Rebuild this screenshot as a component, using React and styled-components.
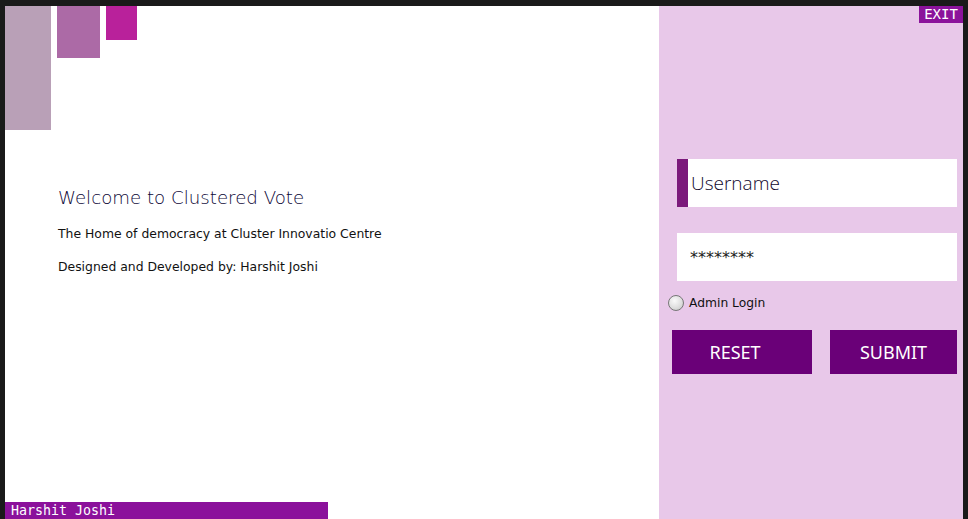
import React from "react";
import styled, { createGlobalStyle } from "styled-components";

const GlobalStyle = createGlobalStyle`
  html, body {
    margin: 0;
    padding: 0;
    background: #1a1a1a;
  }
  body {
    font-family: "DejaVu Sans", "Liberation Sans", sans-serif;
  }
`;

const App = () => {
  return (
    <Frame>
      <GlobalStyle />
      <Window>
        <LeftPanel>
          <Blocks>
            <Block w={46} h={124} color="#b9a0b7" />
            <Block w={43} h={52} color="#ac6aa6" />
            <Block w={31} h={34} color="#b9219b" />
          </Blocks>
          <Intro>
            <Title>Welcome to Clustered Vote</Title>
            <Line>The Home of democracy at Cluster Innovatio Centre</Line>
            <Line>Designed and Developed by: Harshit Joshi</Line>
          </Intro>
          <Footer>Harshit Joshi</Footer>
        </LeftPanel>
        <RightPanel>
          <TopRow>
            <ExitButton>EXIT</ExitButton>
          </TopRow>
          <Field marked>
            <FieldText big>Username</FieldText>
          </Field>
          <Field>
            <FieldText>********</FieldText>
          </Field>
          <RadioRow>
            <Radio />
            <RadioLabel>Admin Login</RadioLabel>
          </RadioRow>
          <Buttons>
            <ActionButton w={140} shift={14}>RESET</ActionButton>
            <ActionButton w={127}>SUBMIT</ActionButton>
          </Buttons>
        </RightPanel>
      </Window>
    </Frame>
  );
};

export default App;

const Frame = styled.div`
  width: 968px;
  height: 519px;
  box-sizing: border-box;
  padding: 6px 5px 0 5px;
  background: #1a1a1a;
  overflow: hidden;
`;

const Window = styled.div`
  display: flex;
  height: 100%;
`;

const LeftPanel = styled.div`
  width: 654px;
  background: #ffffff;
  display: flex;
  flex-direction: column;
`;

const Blocks = styled.div`
  display: flex;
  align-items: flex-start;
  gap: 6px;
`;

const Block = styled.div`
  width: ${(p) => p.w}px;
  height: ${(p) => p.h}px;
  background: ${(p) => p.color};
`;

const Intro = styled.div`
  margin: 57px 0 0 53px;
  display: flex;
  flex-direction: column;
`;

const Title = styled.div`
  font-size: 18.2px;
  font-weight: 200;
  color: #0c0636;
  line-height: 22px;
  margin-bottom: 17px;
`;

const Line = styled.div`
  font-size: 12.4px;
  color: #111;
  line-height: 15px;
  margin-bottom: 18px;
`;

const Footer = styled.div`
  margin-top: auto;
  width: 323px;
  height: 17px;
  background: #8b119b;
  color: #fff;
  font-family: "DejaVu Sans Mono", "Liberation Mono", monospace;
  font-size: 13.3px;
  line-height: 17px;
  padding-left: 6px;
  box-sizing: border-box;
`;

const RightPanel = styled.div`
  flex: 1;
  background: #e8c8e9;
  display: flex;
  flex-direction: column;
`;

const TopRow = styled.div`
  display: flex;
  justify-content: flex-end;
`;

const ExitButton = styled.div`
  width: 44px;
  height: 17px;
  background: #8b139b;
  color: #fff;
  font-family: "DejaVu Sans Mono", "Liberation Mono", monospace;
  font-size: 14px;
  line-height: 17px;
  text-align: center;
`;

const Field = styled.div`
  margin: ${(p) => (p.marked ? "136px" : "26px")} 6px 0 18px;
  height: 48px;
  background: #fff;
  display: flex;
  align-items: center;
  box-sizing: border-box;
  border-left: ${(p) => (p.marked ? "11px solid #7b1a7b" : "none")};
  padding-left: ${(p) => (p.marked ? "3px" : "13px")};
`;

const FieldText = styled.span`
  font-size: ${(p) => (p.big ? "19px" : "16px")};
  font-weight: ${(p) => (p.big ? 300 : 400)};
  color: ${(p) => (p.big ? "#12082e" : "#222")};
  font-family: ${(p) =>
    p.big
      ? `"Open Sans", "Noto Sans", "DejaVu Sans", sans-serif`
      : `"DejaVu Sans", sans-serif`};
`;

const RadioRow = styled.div`
  display: flex;
  align-items: center;
  margin: 14px 0 0 9px;
  height: 16px;
`;

const Radio = styled.span`
  width: 14px;
  height: 14px;
  border-radius: 50%;
  border: 1px solid #777;
  background: radial-gradient(circle at 40% 35%, #fafafa 0%, #dcdcdc 60%, #bdbdbd 100%);
`;

const RadioLabel = styled.span`
  margin-left: 5px;
  font-size: 12.3px;
  color: #111;
`;

const Buttons = styled.div`
  display: flex;
  gap: 18px;
  margin: 19px 0 0 13px;
`;

const ActionButton = styled.div`
  width: ${(p) => p.w}px;
  height: 44px;
  box-sizing: border-box;
  padding-right: ${(p) => p.shift || 0}px;
  background: #6a0078;
  color: #fff;
  font-family: "Noto Sans", "DejaVu Sans", sans-serif;
  font-size: 18px;
  display: flex;
  align-items: center;
  justify-content: center;
`;
